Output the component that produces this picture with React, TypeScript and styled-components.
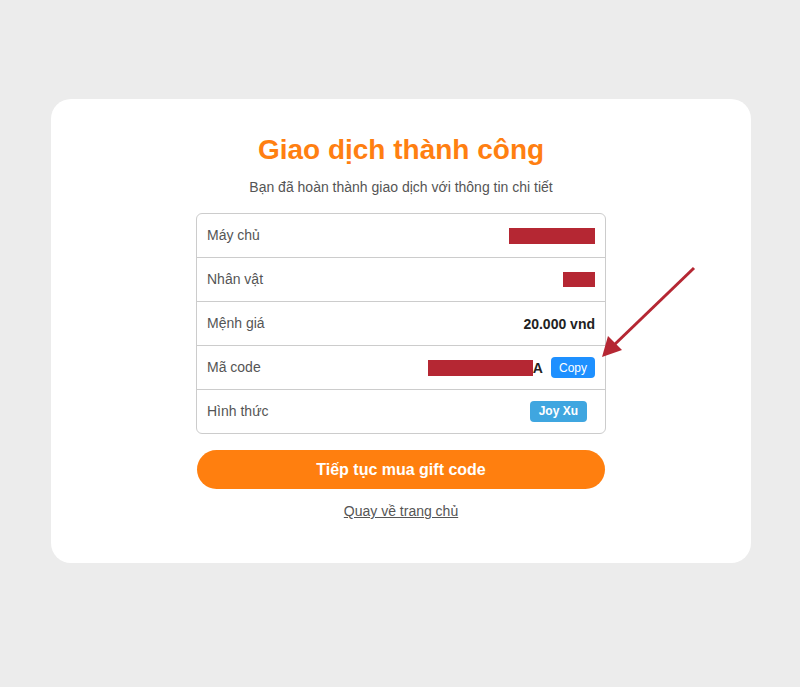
import * as React from "react";
import styled, { createGlobalStyle } from "styled-components";

const GlobalStyle = createGlobalStyle`
  html, body {
    margin: 0;
    padding: 0;
    background: #ececec;
    font-family: "Liberation Sans", Arial, sans-serif;
  }
`;

const SPage = styled.div`
  position: relative;
  min-height: 687px;
  padding-top: 99px;
  box-sizing: border-box;
`;

const SCard = styled.div`
  width: 700px;
  margin: 0 0 0 51px;
  background: #fff;
  border-radius: 20px;
  padding: 33px 0 44px;
  display: flex;
  flex-direction: column;
  align-items: center;
`;

const STitle = styled.h1`
  margin: 0;
  font-size: 28px;
  font-weight: bold;
  color: #ff7f11;
  line-height: 36px;
`;

const SSubtitle = styled.p`
  margin: 10px 0 17px;
  font-size: 14px;
  color: #555;
  line-height: 18px;
`;

const STable = styled.div`
  width: 408px;
  border: 1px solid #ccc;
  border-radius: 6px;
  display: flex;
  flex-direction: column;
`;

const SRow = styled.div`
  height: 43px;
  display: flex;
  align-items: center;
  justify-content: space-between;
  padding: 0 10px;
  border-top: 1px solid #ccc;
  font-size: 14px;
  line-height: 16px;

  &:first-child {
    border-top: none;
  }
`;

const SLabel = styled.span`
  color: #555;
  margin-top: -1px;
`;

const SValue = styled.div`
  display: flex;
  align-items: center;
  font-weight: bold;
  color: #222;
`;

const SRedact = styled.span<{ $w: number; $h: number }>`
  display: inline-block;
  width: ${(p) => p.$w}px;
  height: ${(p) => p.$h}px;
  background: #b52733;
`;

const SCopy = styled.button`
  margin-left: 8px;
  background: #1e90ff;
  color: #fff;
  border: none;
  border-radius: 4px;
  font-family: inherit;
  font-size: 12px;
  height: 21px;
  padding: 0 8px;
`;

const SBadge = styled.span`
  margin-right: 8px;
  background: #3fa6e0;
  color: #fff;
  border-radius: 4px;
  font-size: 12px;
  font-weight: bold;
  height: 21px;
  line-height: 21px;
  padding: 0 9px;
`;

const SMainButton = styled.button`
  margin-top: 16px;
  width: 408px;
  height: 39px;
  border: none;
  border-radius: 20px;
  background: #ff7f0f;
  color: #fff;
  font-family: inherit;
  font-size: 16px;
  font-weight: bold;
`;

const SLink = styled.a`
  margin-top: 14px;
  font-size: 14px;
  color: #555;
  text-decoration: underline;
`;

const SArrow = styled.svg`
  position: absolute;
  left: 595px;
  top: 262px;
`;

const App = () => (
  <>
    <GlobalStyle />
    <SPage>
      <SCard>
        <STitle>Giao dịch thành công</STitle>
        <SSubtitle>Bạn đã hoàn thành giao dịch với thông tin chi tiết</SSubtitle>
        <STable>
          <SRow>
            <SLabel>Máy chủ</SLabel>
            <SValue>
              <SRedact $w={86} $h={16} />
            </SValue>
          </SRow>
          <SRow>
            <SLabel>Nhân vật</SLabel>
            <SValue>
              <SRedact $w={32} $h={15} />
            </SValue>
          </SRow>
          <SRow>
            <SLabel>Mệnh giá</SLabel>
            <SValue>20.000 vnd</SValue>
          </SRow>
          <SRow>
            <SLabel>Mã code</SLabel>
            <SValue>
              <SRedact $w={105} $h={16} />A
              <SCopy>Copy</SCopy>
            </SValue>
          </SRow>
          <SRow>
            <SLabel>Hình thức</SLabel>
            <SBadge>Joy Xu</SBadge>
          </SRow>
        </STable>
        <SMainButton>Tiếp tục mua gift code</SMainButton>
        <SLink href="#">Quay về trang chủ</SLink>
      </SCard>
      <SArrow width="110" height="105" viewBox="0 0 110 105">
        <line x1="99" y1="6" x2="18" y2="84" stroke="#b52733" strokeWidth="3" />
        <polygon points="7,95 13,74 27,88" fill="#b52733" />
      </SArrow>
    </SPage>
  </>
);

export default App;
